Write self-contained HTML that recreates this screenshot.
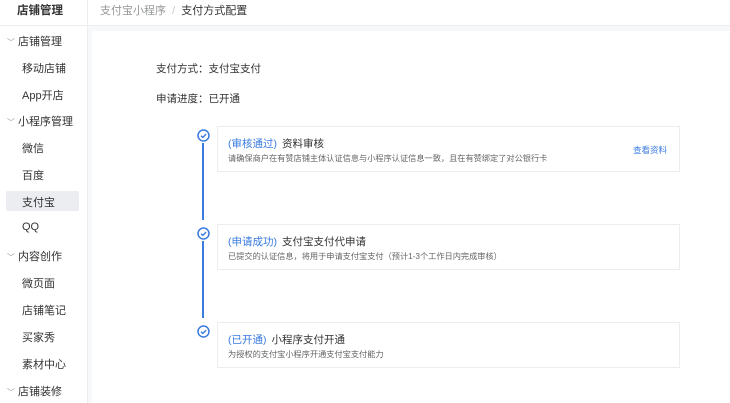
<!DOCTYPE html><html><head><meta charset="utf-8"><style>
*{margin:0;padding:0;box-sizing:border-box}
body{width:730px;height:403px;overflow:hidden;background:#f7f8fa;font-family:"Liberation Sans","Noto Sans CJK SC",sans-serif;color:#323233;position:relative}
.a{position:absolute;white-space:nowrap}
.side{position:absolute;left:0;top:0;width:88px;height:403px;background:#fff;border-right:1px solid #ebedf0}
.hd{position:absolute;left:88px;top:0;right:0;height:26px;background:#fff;border-bottom:1px solid #ebedf0}
.g{font-size:11px;color:#323233}
.s{font-size:11px;color:#323233;left:22px}
.card{position:absolute;left:92px;top:31px;right:0;bottom:0;background:#fff}
.st{position:absolute;left:217px;width:463px;height:46px;border:1px solid #ebedf0;background:#fff}
.t{position:absolute;left:10px;top:9px;font-size:10.5px;white-space:nowrap}
.t b{font-weight:normal;color:#3a7be0;margin-right:5px}
.d{position:absolute;left:10px;top:25px;font-size:8.2px;color:#646566;white-space:nowrap}
.ic{position:absolute;left:197px;width:13px;height:13px}
</style></head><body>
<div class="side">
<div class="a" style="left:17px;top:2px;font-size:11.5px;font-weight:bold">店铺管理</div>
<div style="position:absolute;left:0;top:25px;width:88px;height:1px;background:#ebedf0"></div>
<div style="position:absolute;left:6px;top:191px;width:73px;height:20px;background:#ebedf0;border-radius:2px"></div>
<div class="a g" style="left:7px;top:33px"><span style="font-size:8px;color:#969799">﹀</span> 店铺管理</div>
<div class="a s" style="top:60px">移动店铺</div>
<div class="a s" style="top:87px">App开店</div>
<div class="a g" style="left:7px;top:113px"><span style="font-size:8px;color:#969799">﹀</span> 小程序管理</div>
<div class="a s" style="top:140px">微信</div>
<div class="a s" style="top:167px">百度</div>
<div class="a s" style="top:194px">支付宝</div>
<div class="a s" style="top:221px">QQ</div>
<div class="a g" style="left:7px;top:248px"><span style="font-size:8px;color:#969799">﹀</span> 内容创作</div>
<div class="a s" style="top:275px">微页面</div>
<div class="a s" style="top:302px">店铺笔记</div>
<div class="a s" style="top:329px">买家秀</div>
<div class="a s" style="top:356px">素材中心</div>
<div class="a g" style="left:7px;top:383px"><span style="font-size:8px;color:#969799">﹀</span> 店铺装修</div>
</div>
<div class="hd"><div class="a" style="left:12px;top:2px;font-size:11px"><span style="color:#969799">支付宝小程序</span>&nbsp;&nbsp;<span style="color:#c8c9cc">/</span>&nbsp;&nbsp;支付方式配置</div></div>
<div class="card"></div>
<div class="a" style="left:156px;top:61px;font-size:10.5px">支付方式：支付宝支付</div>
<div class="a" style="left:156px;top:91px;font-size:10.5px">申请进度：已开通</div>
<div style="position:absolute;left:202px;top:143px;width:2px;height:77px;background:#3a7be0"></div>
<div style="position:absolute;left:202px;top:241px;width:2px;height:77px;background:#3a7be0"></div>
<svg class="ic" style="top:129px" viewBox="0 0 13 13"><circle cx="6.5" cy="6.5" r="5.5" fill="none" stroke="#3a7be0" stroke-width="1.5"/><path d="M4 6.7l1.8 1.7 3.3-3.3" fill="none" stroke="#3a7be0" stroke-width="1.4"/></svg>
<svg class="ic" style="top:227px" viewBox="0 0 13 13"><circle cx="6.5" cy="6.5" r="5.5" fill="none" stroke="#3a7be0" stroke-width="1.5"/><path d="M4 6.7l1.8 1.7 3.3-3.3" fill="none" stroke="#3a7be0" stroke-width="1.4"/></svg>
<svg class="ic" style="top:325px" viewBox="0 0 13 13"><circle cx="6.5" cy="6.5" r="5.5" fill="none" stroke="#3a7be0" stroke-width="1.5"/><path d="M4 6.7l1.8 1.7 3.3-3.3" fill="none" stroke="#3a7be0" stroke-width="1.4"/></svg>
<div class="st" style="top:126px"><div class="t"><b>(审核通过)</b>资料审核</div><div class="d">请确保商户在有赞店铺主体认证信息与小程序认证信息一致，且在有赞绑定了对公银行卡</div><div style="position:absolute;left:415px;top:17px;font-size:8.5px;color:#3a7be0">查看资料</div></div>
<div class="st" style="top:224px"><div class="t"><b>(申请成功)</b>支付宝支付代申请</div><div class="d">已提交的认证信息，将用于申请支付宝支付（预计1-3个工作日内完成审核）</div></div>
<div class="st" style="top:322px"><div class="t"><b>(已开通)</b>小程序支付开通</div><div class="d">为授权的支付宝小程序开通支付宝支付能力</div></div>
</body></html>
